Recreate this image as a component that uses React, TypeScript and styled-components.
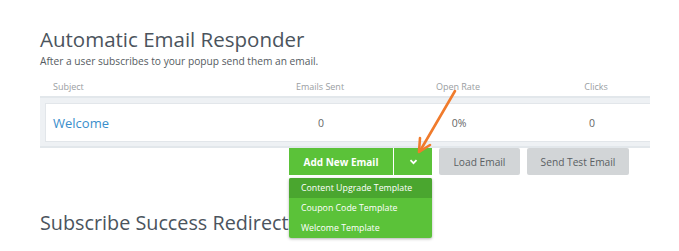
import React from "react";
import styled, { createGlobalStyle } from "styled-components";

const Global = createGlobalStyle`
  body {
    margin: 0;
    background: #fff;
    font-family: "Open Sans", "Liberation Sans", sans-serif;
  }
`;

const columns = [
  { key: "sent", label: "Emails Sent" },
  { key: "open", label: "Open Rate" },
  { key: "clicks", label: "Clicks" },
];

const rows = [{ subject: "Welcome", sent: "0", open: "0%", clicks: "0" }];

const templates = ["Content Upgrade Template", "Coupon Code Template", "Welcome Template"];

export default function App() {
  return (
    <Page>
      <Global />
      <Title>Automatic Email Responder</Title>
      <Subtitle>After a user subscribes to your popup send them an email.</Subtitle>
      <Table>
        <HeadRow>
          <SubjectHead>Subject</SubjectHead>
          {columns.map((c) => (
            <HeadCell key={c.key}>{c.label}</HeadCell>
          ))}
        </HeadRow>
        <Body>
          {rows.map((r) => (
            <Row key={r.subject}>
              <SubjectLink>{r.subject}</SubjectLink>
              <Cell>{r.sent}</Cell>
              <Cell>{r.open}</Cell>
              <Cell>{r.clicks}</Cell>
            </Row>
          ))}
        </Body>
      </Table>
      <Actions>
        <SplitGroup>
          <GreenButton>Add New Email</GreenButton>
          <Caret>
            <svg width="9" height="6" viewBox="0 0 9 6">
              <path d="M1.5 1.2 L4.5 4.2 L7.5 1.2" fill="none" stroke="#fff" strokeWidth="1.8" />
            </svg>
          </Caret>
          <Menu>
            {templates.map((t, i) => (
              <MenuItem key={t} active={i === 0}>
                {t}
              </MenuItem>
            ))}
          </Menu>
        </SplitGroup>
        <GrayButton width="81px">Load Email</GrayButton>
        <GrayButton width="102px">Send Test Email</GrayButton>
      </Actions>
      <Title size="19.8px">Subscribe Success Redirect</Title>
      <Arrow width="40" height="66" viewBox="0 0 40 66">
        <path d="M38 2 L3 62" stroke="#f07b2c" strokeWidth="2.6" strokeLinecap="round" fill="none" />
        <path d="M3 49 L2 63 L13 56" stroke="#f07b2c" strokeWidth="2.6" strokeLinecap="round" strokeLinejoin="round" fill="none" />
      </Arrow>
    </Page>
  );
}

const Page = styled.div`
  position: relative;
  padding: 26px 0 0 40px;
  height: 251px;
  box-sizing: border-box;
  overflow: hidden;
`;

const Title = styled.h1<{ size?: string }>`
  margin: 0;
  font-size: ${(p) => p.size ?? "20.5px"};
  line-height: 26px;
  font-weight: 400;
  color: #4b545d;
`;

const Subtitle = styled.p`
  margin: 2px 0 0;
  font-size: 10.2px;
  line-height: 14px;
  color: #555b61;
`;

const Table = styled.div`
  width: 610px;
  margin-top: 8px;
`;

const HeadRow = styled.div`
  display: grid;
  grid-template-columns: 211px 138px 138px 138px;
  height: 20px;
  align-items: center;
  border-bottom: 2px solid #e2e7eb;
`;

const SubjectHead = styled.div`
  padding-left: 13px;
  font-size: 9px;
  color: #9a9ea2;
`;

const HeadCell = styled.div`
  text-align: center;
  font-size: 9px;
  color: #9a9ea2;
`;

const Body = styled.div`
  background: #eef1f4;
  padding: 5px 0 4px 5px;
  border-bottom: 2px solid #e2e7eb;
`;

const Row = styled.div`
  display: grid;
  grid-template-columns: 206px 138px 138px 128px;
  height: 39px;
  align-items: center;
  background: #fff;
  border: 1px solid #e2e6ea;
  border-right: none;
  box-sizing: border-box;
`;

const SubjectLink = styled.a`
  padding-left: 7px;
  font-size: 13px;
  color: #3a8ecb;
  cursor: pointer;
`;

const Cell = styled.div`
  text-align: center;
  font-size: 10.5px;
  color: #666;
`;

const Actions = styled.div`
  display: flex;
  gap: 7px;
  padding-left: 249px;
  height: 27px;
  margin-bottom: 35px;
`;

const SplitGroup = styled.div`
  position: relative;
  display: flex;
  gap: 1px;
  background: #fff;
`;

const GreenButton = styled.button`
  width: 104px;
  height: 27px;
  border: none;
  background: #5bc239;
  color: #fff;
  font-family: "Open Sans", "Liberation Sans", sans-serif;
  font-weight: 700;
  font-size: 10px;
  padding: 0;
`;

const Caret = styled.button`
  width: 38px;
  height: 27px;
  border: none;
  background: #5bc239;
  display: grid;
  place-items: center;
  padding: 0;
`;

const Menu = styled.div`
  position: absolute;
  top: 30px;
  left: 0;
  width: 143px;
  background: #5bc239;
  border-radius: 2px;
  box-shadow: 0 1px 3px rgba(0, 0, 0, 0.3);
  overflow: hidden;
  z-index: 2;
`;

const MenuItem = styled.div<{ active?: boolean }>`
  height: 20px;
  line-height: 20px;
  padding-left: 12px;
  font-size: 8.8px;
  color: #fff;
  background: ${(p) => (p.active ? "#4aa62f" : "transparent")};
  white-space: nowrap;
`;

const GrayButton = styled.button<{ width: string }>`
  width: ${(p) => p.width};
  height: 27px;
  border: none;
  border-radius: 2px;
  background: #d2d5d7;
  color: #5a5f63;
  font-family: "Open Sans", "Liberation Sans", sans-serif;
  font-size: 10.2px;
  padding: 0;
`;

const Arrow = styled.svg`
  position: absolute;
  left: 417px;
  top: 89px;
  z-index: 3;
`;
